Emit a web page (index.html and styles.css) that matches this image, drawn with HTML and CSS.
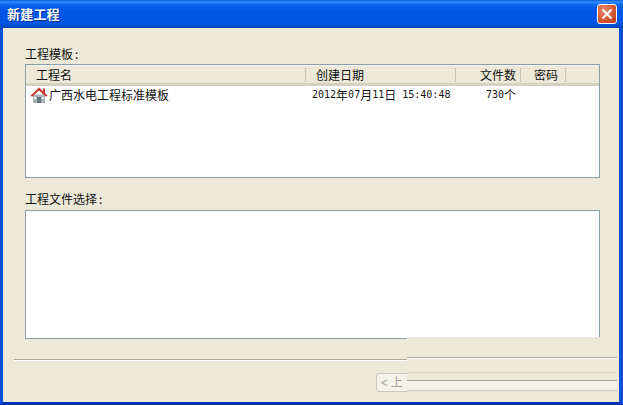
FILE: index.html
```html
<!DOCTYPE html>
<html lang="zh">
<head>
<meta charset="utf-8">
<title>新建工程</title>
<link rel="stylesheet" href="styles.css">
</head>
<body>
<div class="window">
  <div class="titlebar">
    <span class="title">新建工程</span>
    <span class="close">
      <svg width="20" height="20" viewBox="0 0 20 20"><path d="M5.500 5.500 14.500 14.500M14.500 5.500 5.500 14.500" stroke="#fff" stroke-width="2" fill="none"/></svg>
    </span>
  </div>
  <div class="client">
    <div class="label">工程模板<span class="colon">:</span></div>
    <div class="list list-top">
      <div class="cols head">
        <div class="cell sep h-name">工程名</div>
        <div class="cell sep h-date">创建日期</div>
        <div class="cell sep h-count">文件数</div>
        <div class="cell sep h-pass">密码</div>
        <div class="cell"></div>
      </div>
      <div class="cols row">
        <div class="cell r-name">
          <svg class="house" width="18" height="18" viewBox="0 0 18 18">
            <path d="M3 8.500h12V17H3z" fill="#a9b2b8"/>
            <path d="M7 11h4v6H7z" fill="#66757f"/>
            <path d="M4 11h2v2H4zM12 11h2v2h-2z" fill="#eef2f4"/>
            <path d="M0.500 9.500 9 1.500l8.500 8-1.500 1.200L9 4.500 2 10.700z" fill="#c8382c"/>
            <path d="M13 2.500h2v5l-2-1.800z" fill="#c8382c"/>
          </svg>
          <span>广西水电工程标准模板</span>
        </div>
        <div class="cell r-date"><span>2012</span><span class="han">年</span><span>07</span><span class="han">月</span><span>11</span><span class="han">日</span><span>&nbsp;15:40:48</span></div>
        <div class="cell r-count"><span>730</span><span class="han">个</span></div>
        <div class="cell"></div>
        <div class="cell"></div>
      </div>
    </div>
    <div class="label label-second">工程文件选择<span class="colon">:</span></div>
    <div class="list list-bottom"></div>
    <div class="rule"></div>
  </div>
  <div class="back-btn"><span class="chev">&lt;</span> 上</div>
  <div class="ghost">
    <div class="ghost-rule"></div>
    <div class="ghost-strip">
      <div class="ghost-line"></div>
    </div>
  </div>
</div>
</body>
</html>
```

FILE: styles.css
```css
* { box-sizing: border-box; }
html, body { margin: 0; padding: 0; background: #ece9d8; }
body { font: 12px/14px "Noto Sans CJK SC", "Liberation Sans", sans-serif; color: #111; }

.window {
  position: relative;
  width: 623px;
  height: 405px;
  display: flex;
  flex-direction: column;
  overflow: hidden;
}

.titlebar {
  height: 28px;
  flex: none;
  display: flex;
  align-items: center;
  justify-content: space-between;
  padding: 0 6px 1px 7px;
  background: linear-gradient(#0a5fe0 0, #2f8dfb 2px, #0a62ee 5px, #0055e5 12px, #0058ea 22px, #0448c8 27px, #0340b0 28px);
}
.title { color: #fff; font-size: 13px; font-weight: 700; text-shadow: 1px 1px 0 #0b2f8c; letter-spacing: .2px; }
.close {
  width: 20px;
  height: 20px;
  display: flex;
  border: 1px solid #fff;
  border-radius: 3px;
  background: radial-gradient(circle at 35% 30%, #e68b6c, #d2532d 60%, #b93a1c);
}
.close svg { margin: -1px; }

.client {
  flex: 1;
  display: flex;
  flex-direction: column;
  padding: 19px 19px 0 22px;
  background: #ece9d8;
  border-left: 3px solid #0a4fd8;
  border-right: 4px solid #0a4fd8;
  border-bottom: 3px solid #0831b0;
}

.label { height: 14px; margin-bottom: 3px; }
.label-second { margin-top: 14px; margin-bottom: 4px; }
.colon { margin-left: 2px; }

.list { background: #fff; border: 1px solid #8c9ea8; flex: none; }
.list-top { height: 114px; }
.list-bottom { height: 129px; }

.cols { display: grid; grid-template-columns: 280px 150px 65px 45px 1fr; }
.head {
  height: 21px;
  padding-top: 2px;
  background: #ece9d8;
  border-bottom: 3px solid #d6d2c2;
  box-shadow: inset 0 1px 0 #f5f4ea;
  align-items: center;
}
.cell { height: 100%; display: flex; align-items: center; min-width: 0; white-space: nowrap; }
.sep { border-right: 1px solid #c9c6b6; height: 14px; }
.h-name { padding-left: 10px; }
.h-date { padding-left: 10px; }
.h-count { justify-content: flex-end; padding-right: 4px; }
.h-pass { padding-left: 13px; }

.row { height: 18px; }
.r-name { padding-left: 4px; }
.r-name span { margin-left: 1px; }
.house { flex: none; }
.r-date { padding-left: 6px; font-family: "DejaVu Sans Mono", monospace; font-size: 10px; }
.r-count { justify-content: flex-end; padding-right: 5px; font-family: "DejaVu Sans Mono", monospace; font-size: 10px; }
.han { font-family: "Noto Sans CJK SC", sans-serif; font-size: 12px; margin: 0; }

.rule { margin: 20px -8px 0 -11px; height: 2px; background: #aca899; border-bottom: 1px solid #fff; }

.back-btn {
  position: absolute;
  left: 376px;
  top: 373px;
  width: 36px;
  height: 19px;
  border: 1px solid #c9c7ba;
  border-radius: 3px;
  background: #f4f3ea;
  color: #a3a08f;
  padding-left: 4px;
  line-height: 16px;
}
.chev { font-family: "Liberation Sans", sans-serif; }

.ghost {
  position: absolute;
  left: 407px;
  top: 337px;
  width: 210px;
  height: 65px;
  background: #ece9d8;
  display: flex;
  flex-direction: column;
  padding-top: 20px;
}
.ghost-rule { height: 2px; background: #aca899; border-bottom: 1px solid #fff; }
.ghost-strip {
  margin-top: 13px;
  height: 19px;
  border-top: 1px solid #d6d3c5;
  border-bottom: 1px solid #c9c7ba;
  background: linear-gradient(#ece9d8 0 7px, #f4f3ea 7px);
  padding-top: 7px;
}
.ghost-line { height: 1px; background: #aca899; }
```
